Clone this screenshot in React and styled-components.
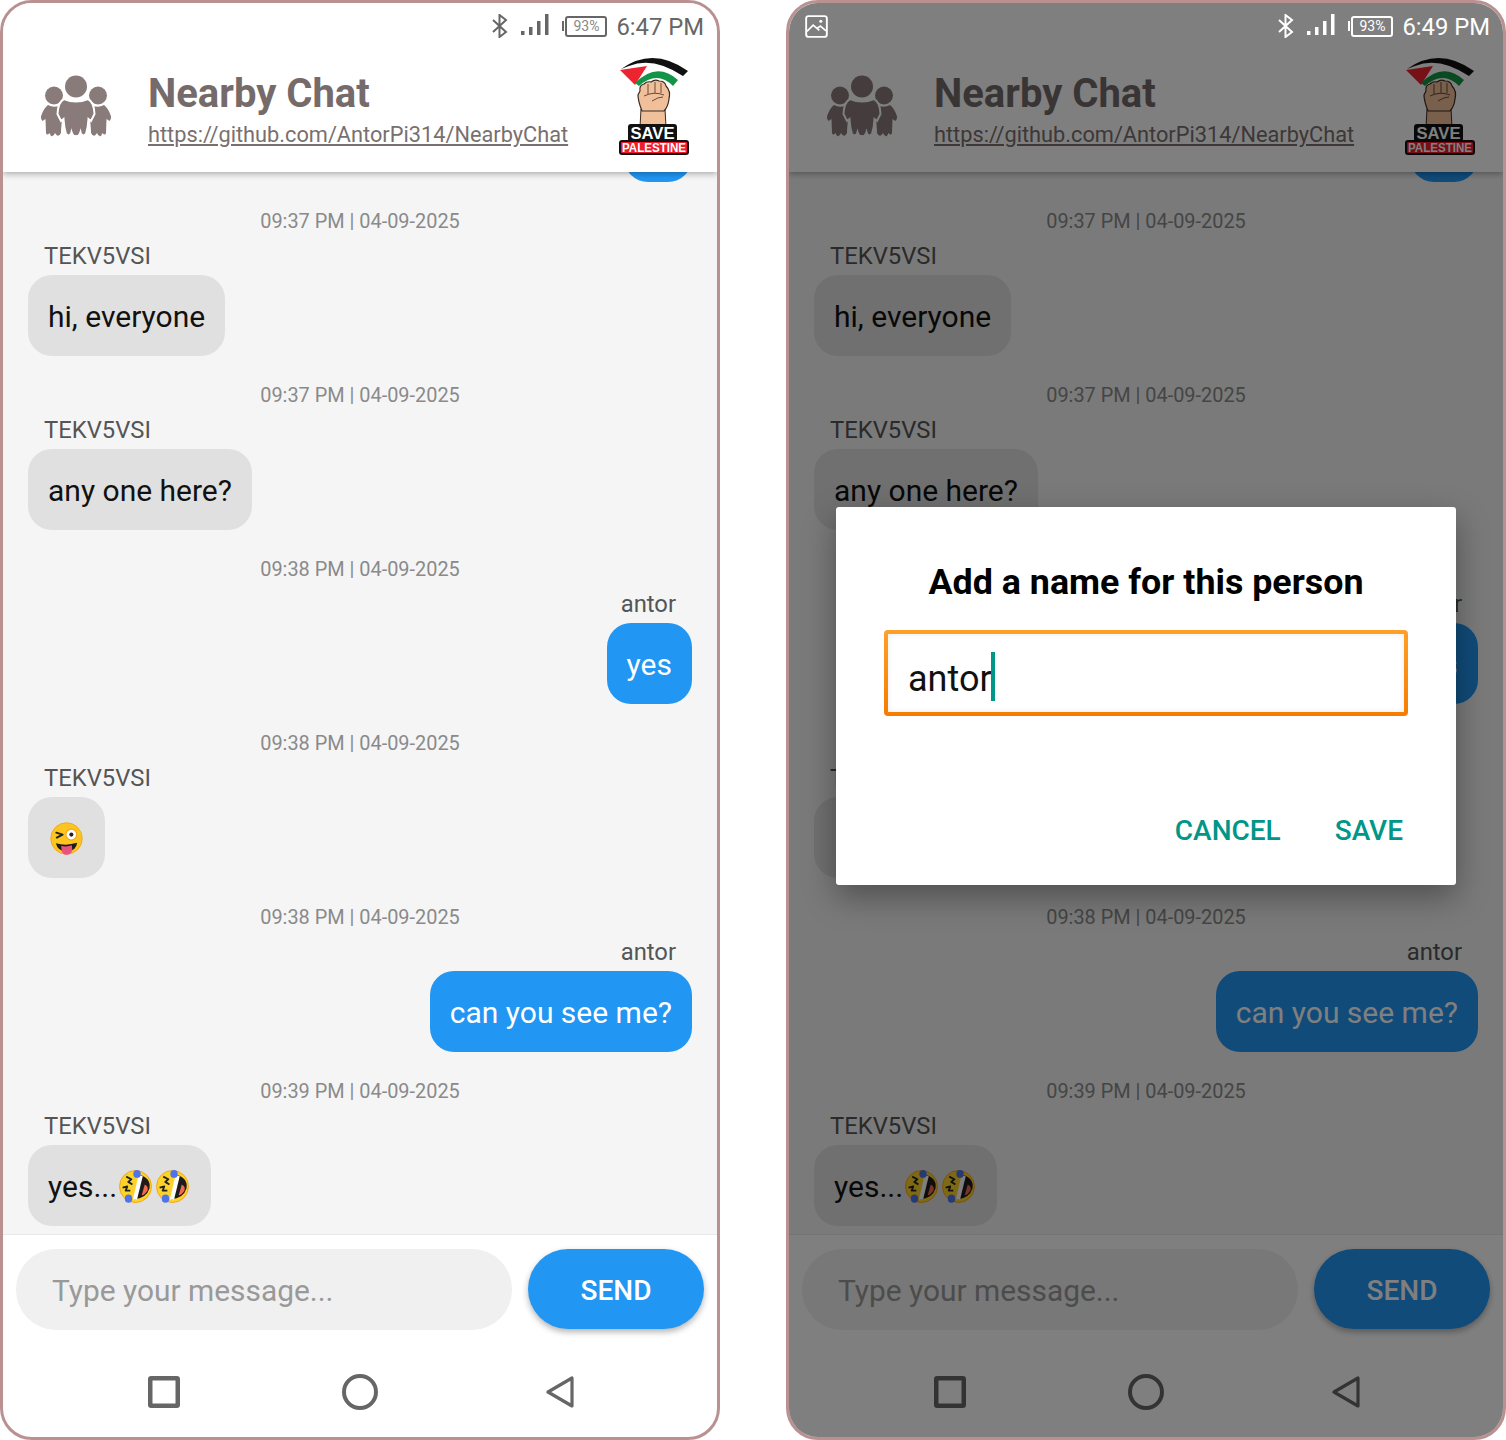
import React from 'react'
import styled, { createGlobalStyle } from 'styled-components'

const GlobalStyle = createGlobalStyle`
  html, body {
    margin: 0;
    background: #fff;
  }
  * {
    box-sizing: border-box;
  }
`

const messages = [
  { time: '09:37 PM | 04-09-2025', name: 'TEKV5VSI', text: 'hi, everyone' },
  { time: '09:37 PM | 04-09-2025', name: 'TEKV5VSI', text: 'any one here?' },
  { time: '09:38 PM | 04-09-2025', name: 'antor', text: 'yes', mine: true },
  { time: '09:38 PM | 04-09-2025', name: 'TEKV5VSI', emoji: ['wink'] },
  { time: '09:38 PM | 04-09-2025', name: 'antor', text: 'can you see me?', mine: true },
  { time: '09:39 PM | 04-09-2025', name: 'TEKV5VSI', text: 'yes...', emoji: ['laugh', 'laugh'] },
]

const WinkEmoji = () => (
  <EmojiSvg viewBox="0 0 34 34">
    <circle cx="17" cy="17" r="16.2" fill="#fcc61f" stroke="#f5a01a" strokeWidth="0.9" />
    <path d="M6.5 11 L13 13 L7 16" fill="none" stroke="#222" strokeWidth="2" strokeLinecap="round" strokeLinejoin="round" />
    <circle cx="22" cy="13" r="6.2" fill="#f6a11e" />
    <circle cx="22" cy="13" r="5" fill="#fff" />
    <circle cx="22" cy="13" r="2.1" fill="#222" />
    <path d="M6 22 Q17 25 28 21.5 Q27 30 17 31 Q8 30 6 22 Z" fill="#1c1c1c" />
    <path d="M11.5 24.5 Q17 26 22.5 24 L23 29 Q22 33.5 17 33.7 Q12.5 33.5 12 29 Z" fill="#e8537f" />
  </EmojiSvg>
)

const LaughEmoji = () => (
  <EmojiSvg viewBox="0 0 32 32">
    <circle cx="16" cy="16" r="15.5" fill="#fdd32a" stroke="#f5a01a" strokeWidth="0.9" />
    <path d="M20 4.5 Q31.5 8 29.5 18 Q27 27 15 28.5 Z" fill="#1f1b1b" />
    <path d="M19 4.5 L23 6 L17.5 28.5 L13.5 28.5 Z" fill="#fff" />
    <path d="M25 14 Q29 16 27.5 20 Q25 24 22 24.5 Z" fill="#ef6a4e" />
    <path d="M7 6.5 L12 9 L9 11.5 L13 14" fill="none" stroke="#222" strokeWidth="1.8" strokeLinejoin="round" />
    <path d="M3.5 17 L8 16 L6.5 20 L11 20" fill="none" stroke="#222" strokeWidth="1.8" strokeLinejoin="round" />
    <ellipse cx="17.5" cy="3.8" rx="3.6" ry="3.8" fill="#4f74ea" />
    <ellipse cx="9.2" cy="27.8" rx="3.6" ry="4" fill="#4f74ea" />
  </EmojiSvg>
)

const PeopleIcon = () => (
  <PeopleSvg viewBox="0 0 72 64">
    <g fill="#8a7b7b">
      <circle cx="36" cy="12.5" r="11" />
      <circle cx="14" cy="21.5" r="9" />
      <circle cx="58" cy="21.5" r="9" />
      <path d="M8 31 Q13 34 19 32 L22 45 Q21 55 21 59 Q19 63 16.5 61 L15 59 Q13.5 63 11 62 L9.5 59 Q7 62 6 59 L5.5 45 L2.5 47 Q0 44 1.5 41 Q4 34 8 31 Z" />
      <path d="M64 31 Q59 34 53 32 L50 45 Q51 55 51 59 Q53 63 55.5 61 L57 59 Q58.5 63 61 62 L62.5 59 Q65 62 66 59 L66.5 45 L69.5 47 Q72 44 70.5 41 Q68 34 64 31 Z" />
      <path
        d="M24 25 Q36 30 48 25 Q54 28 54.5 40 L51 47 L48.5 45 Q48 54 46 60 Q43.5 63 41 60 L40.5 58 Q39 63 36 62 Q33 63 31.5 58 L31 60 Q28.5 63 26 60 Q24 54 23.5 45 L21 47 L17.5 40 Q18 28 24 25 Z"
        stroke="#fff"
        strokeWidth="2"
      />
    </g>
  </PeopleSvg>
)

const PalestineLogo = () => (
  <LogoSvg viewBox="0 0 72 100">
    <path d="M3 14 Q35 -9 70 16 L65 21 Q35 1 11 11 Z" fill="#111" />
    <path d="M2 15 L29 11 L17 30 Z" fill="#ee2330" />
    <path d="M17 28 Q39 6 60 25 L55 31 Q39 15 21 31 Z" fill="#149447" />
    <path d="M23 54 L47 54 L48 72 L22 72 Z" fill="#f0c09a" stroke="#3a2a22" strokeWidth="1" />
    <path d="M22 36 Q21 30 26 29 Q29 26 33 27 Q37 24 41 26 Q47 26 48 31 Q53 36 51 44 Q50 52 46 56 L24 56 Q20 46 20 40 Z" fill="#f0c09a" stroke="#3a2a22" strokeWidth="1.2" />
    <path d="M30 29 L30 39 M37 27 L37 38 M43 28 L43 38 M26 41 Q36 36 46 40 M34 46 Q40 42 45 42" fill="none" stroke="#6b4a36" strokeWidth="1" />
    <rect x="10" y="69" width="49" height="18" rx="3" fill="#111" />
    <rect x="1" y="85" width="70" height="15" rx="3" fill="#111" />
    <rect x="3" y="87" width="66" height="11" rx="1" fill="#ee1c2b" />
    <LogoText x="34.5" y="84" fontSize="17" fill="#fff" textLength="44" lengthAdjust="spacingAndGlyphs">SAVE</LogoText>
    <LogoText x="36" y="96.5" fontSize="12" fill="#fff" textLength="64" lengthAdjust="spacingAndGlyphs">PALESTINE</LogoText>
  </LogoSvg>
)

const Message = ({ time, name, text, emoji = [], mine }) => (
  <Block>
    <Time>{time}</Time>
    <Name $mine={mine}>{name}</Name>
    <Bubble $mine={mine}>
      {text}
      {emoji.map((e, i) => (e === 'wink' ? <WinkEmoji key={i} /> : <LaughEmoji key={i} />))}
    </Bubble>
  </Block>
)

const Phone = ({ clock, dimmed }) => {
  const statusColor = dimmed ? '#fff' : '#666'
  return (
    <PhoneFrame>
      <Top>
        <StatusBar $dimmed={dimmed}>
          {dimmed && (
            <GalleryIcon viewBox="0 0 24 24">
              <rect x="1.2" y="1.2" width="21.6" height="21.6" rx="2.5" fill="none" stroke="#fff" strokeWidth="2" />
              <path d="M2 17 L8.5 10.5 L15 16 M12.5 14 L16 11.5 L22 16.5" fill="none" stroke="#fff" strokeWidth="1.8" />
              <circle cx="16.5" cy="6.5" r="1.6" fill="#fff" />
            </GalleryIcon>
          )}
          <StatusSpacer />
          <BluetoothIcon viewBox="0 0 16 24">
            <path d="M1 6 L14 18 L7.5 23 L7.5 1 L14 6 L1 18" fill="none" stroke={statusColor} strokeWidth="2" />
          </BluetoothIcon>
          <SignalIcon viewBox="0 0 28 22">
            <rect x="0" y="17" width="3.5" height="4" fill={statusColor} />
            <rect x="8" y="13" width="3.5" height="8" fill={statusColor} />
            <rect x="16" y="7" width="3.5" height="14" fill={statusColor} />
            <rect x="24" y="0" width="3.5" height="21" fill={statusColor} />
          </SignalIcon>
          <BatteryNub $dimmed={dimmed} />
          <Battery $dimmed={dimmed}>93%</Battery>
          <Clock $dimmed={dimmed}>{clock}</Clock>
        </StatusBar>
        <Header>
          <PeopleIcon />
          <HeaderText>
            <Title>Nearby Chat</Title>
            <RepoLink>https://github.com/AntorPi314/NearbyChat</RepoLink>
          </HeaderText>
          <PalestineLogo />
        </Header>
      </Top>

      <Chat>
        <ClippedBubble />
        {messages.map((m, i) => <Message key={i} {...m} />)}
      </Chat>

      <Composer>
        <MessageInput placeholder="Type your message..." readOnly />
        <SendButton>SEND</SendButton>
      </Composer>

      <NavBar>
        <NavSquare viewBox="0 0 32 32">
          <rect x="2.25" y="2.25" width="27.5" height="27.5" rx="1" fill="none" stroke="#666" strokeWidth="4.5" />
        </NavSquare>
        <NavCircle viewBox="0 0 36 36">
          <circle cx="18" cy="18" r="16" fill="none" stroke="#666" strokeWidth="4" />
        </NavCircle>
        <NavBack viewBox="0 0 28 32">
          <path d="M26 2 L26 30 L2 16 Z" fill="none" stroke="#666" strokeWidth="3.2" strokeLinejoin="round" />
        </NavBack>
      </NavBar>

      {dimmed && (
        <Overlay>
          <Dialog>
            <DialogTitle>Add a name for this person</DialogTitle>
            <NameField>
              <NameValue>antor</NameValue>
              <Caret />
            </NameField>
            <DialogActions>
              <DialogButton>CANCEL</DialogButton>
              <DialogButton>SAVE</DialogButton>
            </DialogActions>
          </Dialog>
        </Overlay>
      )}
    </PhoneFrame>
  )
}

const App = () => (
  <>
    <GlobalStyle />
    <Page>
      <Phone clock="6:47 PM" />
      <Phone clock="6:49 PM" dimmed />
    </Page>
  </>
)

const Page = styled.div`
  display: flex;
  gap: 66px;
  width: 1506px;
  height: 1440px;
  font-family: Roboto, "Liberation Sans", sans-serif;
`

const PhoneFrame = styled.div`
  position: relative;
  display: flex;
  flex-direction: column;
  width: 720px;
  height: 1440px;
  border: 3px solid #b99191;
  border-radius: 32px;
  background: #fff;
  overflow: hidden;
`

const Top = styled.div`
  position: relative;
  flex: none;
  height: 169px;
  background: #fff;
  box-shadow: 0 2px 6px rgba(0, 0, 0, 0.3);
`

const StatusBar = styled.div`
  position: relative;
  z-index: 3;
  display: flex;
  align-items: flex-start;
  height: 47px;
  padding: 9px 13px 0 16px;
`

const StatusSpacer = styled.div`
  flex: 1;
`

const GalleryIcon = styled.svg`
  width: 23px;
  height: 23px;
  margin-top: 3px;
`

const BluetoothIcon = styled.svg`
  width: 16px;
  height: 24px;
  margin-top: 2px;
`

const SignalIcon = styled.svg`
  width: 28px;
  height: 22px;
  margin: 2px 0 0 13px;
`

const BatteryNub = styled.div`
  width: 2px;
  height: 10px;
  margin: 9px 0 0 13px;
  background: ${(p) => (p.$dimmed ? '#fff' : '#666')};
`

const Battery = styled.div`
  width: 42px;
  height: 21px;
  margin: 4px 0 0 1px;
  border: 2px solid ${(p) => (p.$dimmed ? '#fff' : '#666')};
  border-radius: 3px;
  color: ${(p) => (p.$dimmed ? '#fff' : '#888')};
  font-size: 14px;
  line-height: 17px;
  text-align: center;
`

const Clock = styled.div`
  margin-left: 9px;
  color: ${(p) => (p.$dimmed ? '#fff' : '#666')};
  font-size: 23.8px;
  line-height: 30px;
`

const Header = styled.div`
  display: flex;
  align-items: flex-start;
  height: 122px;
  padding: 5px 27px 0 37px;
`

const PeopleSvg = styled.svg`
  flex: none;
  width: 72px;
  height: 64px;
  margin-top: 19px;
`

const HeaderText = styled.div`
  flex: 1;
  margin: 14px 0 0 36px;
`

const Title = styled.div`
  color: #756b6b;
  font-size: 40px;
  font-weight: 700;
  line-height: 50px;
`

const RepoLink = styled.a`
  display: block;
  margin-top: 1px;
  color: #7a6f6f;
  font-size: 21.75px;
  line-height: 30px;
  text-decoration: underline;
`

const LogoSvg = styled.svg`
  flex: none;
  width: 72px;
  height: 100px;
`

const LogoText = styled.text`
  font-family: "Liberation Sans", sans-serif;
  font-weight: 700;
  text-anchor: middle;
`

const Chat = styled.div`
  display: flex;
  flex: 1;
  flex-direction: column;
  justify-content: flex-end;
  gap: 27px;
  min-height: 0;
  padding: 0 25px 8px;
  background: #f5f5f5;
  overflow: hidden;
`

const ClippedBubble = styled.div`
  flex: none;
  align-self: flex-end;
  width: 68px;
  height: 81px;
  border-radius: 24px;
  background: #2196f3;
`

const Block = styled.div`
  display: flex;
  flex: none;
  flex-direction: column;
`

const Time = styled.div`
  height: 24px;
  margin-bottom: 9px;
  padding-top: 1px;
  color: #8a8a8a;
  font-size: 19.9px;
  line-height: 24px;
  text-align: center;
`

const Name = styled.div`
  margin: 0 16px 5px;
  color: #555;
  font-size: 23.8px;
  line-height: 28px;
  text-align: ${(p) => (p.$mine ? 'right' : 'left')};
`

const Bubble = styled.div`
  display: flex;
  align-items: center;
  align-self: ${(p) => (p.$mine ? 'flex-end' : 'flex-start')};
  height: 81px;
  padding: 2px 20px 0;
  border-radius: 24px;
  background: ${(p) => (p.$mine ? '#2196f3' : '#e0e0e0')};
  color: ${(p) => (p.$mine ? '#fff' : '#111')};
  font-size: 30px;
`

const EmojiSvg = styled.svg`
  flex: none;
  width: 33px;
  height: 33px;
  margin: 0 2px;
`

const Composer = styled.div`
  display: flex;
  flex: none;
  align-items: flex-start;
  gap: 16px;
  height: 116px;
  padding: 14px 13px 0;
  border-top: 1px solid #e8e8e8;
`

const MessageInput = styled.input`
  width: 496px;
  height: 81px;
  padding: 2px 36px 0;
  border: 0;
  border-radius: 40px;
  outline: 0;
  background: #f0f0f0;
  color: #111;
  font-family: inherit;
  font-size: 29.9px;

  &::placeholder {
    color: #999;
    opacity: 1;
  }
`

const SendButton = styled.button`
  width: 176px;
  height: 80px;
  padding: 2px 0 0;
  border: 0;
  border-radius: 40px;
  background: #2196f3;
  box-shadow: 0 3px 6px rgba(0, 0, 0, 0.3);
  color: #fff;
  font-family: inherit;
  font-size: 28px;
  font-weight: 500;
`

const NavBar = styled.div`
  display: flex;
  flex: none;
  align-items: center;
  height: 87px;
  padding: 0 0 3px 145px;
`

const NavSquare = styled.svg`
  width: 32px;
  height: 32px;
`

const NavCircle = styled.svg`
  width: 36px;
  height: 36px;
  margin-left: 162px;
`

const NavBack = styled.svg`
  width: 28px;
  height: 32px;
  margin-left: 168px;
`

const Overlay = styled.div`
  position: absolute;
  inset: 0;
  z-index: 2;
  display: flex;
  justify-content: center;
  padding-top: 504px;
  background: rgba(0, 0, 0, 0.5);
`

const Dialog = styled.div`
  display: flex;
  flex-direction: column;
  width: 620px;
  height: 378px;
  padding: 50px 48px 0;
  border-radius: 3px;
  background: #fff;
  box-shadow: 0 12px 32px rgba(0, 0, 0, 0.35);
`

const DialogTitle = styled.div`
  color: #000;
  font-size: 35.8px;
  font-weight: 700;
  line-height: 50px;
  text-align: center;
`

const NameField = styled.div`
  display: flex;
  align-items: center;
  height: 86px;
  margin-top: 23px;
  padding: 0 20px;
  border: 4px solid transparent;
  border-radius: 4px;
  background: linear-gradient(#fff, #fff) padding-box, linear-gradient(#ffa02a, #f57c00) border-box;
  box-shadow: inset 0 0 6px rgba(0, 0, 0, 0.08);
`

const NameValue = styled.span`
  color: #111;
  font-size: 36px;
  padding-top: 12px;
`

const Caret = styled.span`
  width: 4px;
  height: 49px;
  margin: 6px 0 0 -1px;
  background: #009688;
`

const DialogActions = styled.div`
  display: flex;
  justify-content: flex-end;
  gap: 54px;
  margin-top: 98px;
  padding-right: 5px;
`

const DialogButton = styled.div`
  color: #009688;
  font-size: 28px;
  font-weight: 500;
  line-height: 34px;
`

export default App
